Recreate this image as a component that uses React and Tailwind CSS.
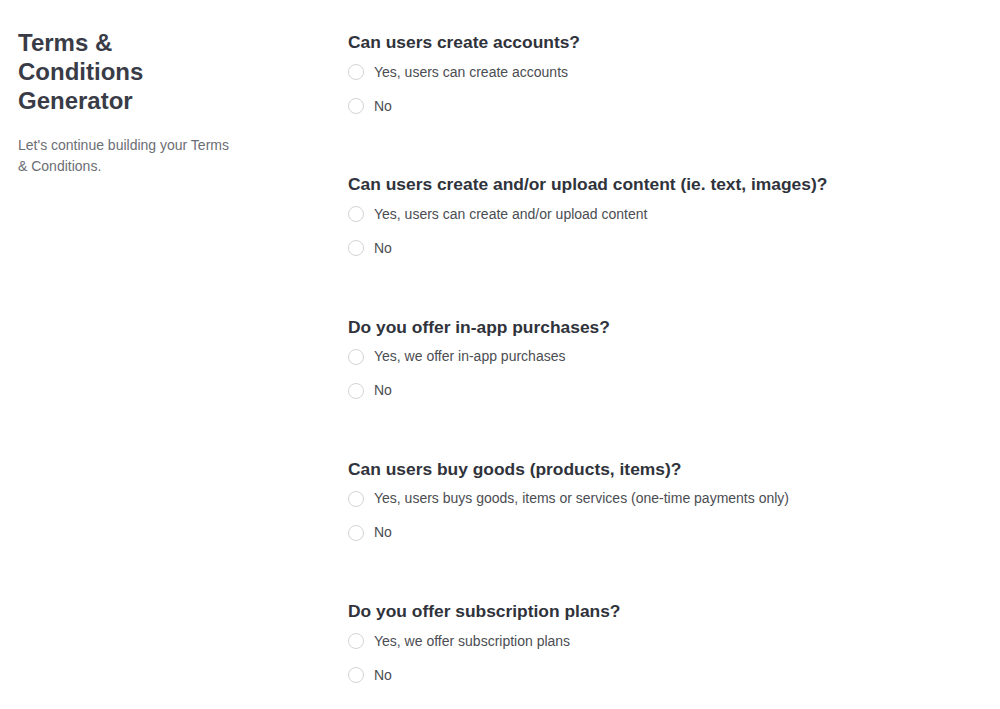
import React from 'react';

const questions = [
  { q: 'Can users create accounts?', yes: 'Yes, users can create accounts' },
  { q: 'Can users create and/or upload content (ie. text, images)?', yes: 'Yes, users can create and/or upload content' },
  { q: 'Do you offer in-app purchases?', yes: 'Yes, we offer in-app purchases' },
  { q: 'Can users buy goods (products, items)?', yes: 'Yes, users buys goods, items or services (one-time payments only)' },
  { q: 'Do you offer subscription plans?', yes: 'Yes, we offer subscription plans' },
];

const Radio = ({ label }) => (
  <label className="flex items-center h-[34px] cursor-pointer">
    <span className="w-4 h-4 rounded-full border border-[#d4d4d4] bg-white shrink-0"></span>
    <span className="ml-[10px] text-[14px] text-[#4b4d52]">{label}</span>
  </label>
);

const App = () => {
  return (
    <div className="min-h-screen bg-white flex pl-[18px] pt-[28px]" style={{ fontFamily: '"Liberation Sans", Arial, sans-serif' }}>
      <div className="w-[330px] shrink-0">
        <h1 className="text-[24px] leading-[29px] font-bold text-[#393c47] w-[200px]">
          Terms &amp; Conditions Generator
        </h1>
        <p className="mt-[20px] text-[14px] leading-[21px] text-[#6b6e75] w-[215px]">
          Let's continue building your Terms &amp; Conditions.
        </p>
      </div>
      <div className="flex flex-col gap-[49.25px] pt-[2px]">
        {questions.map((item) => (
          <div key={item.q}>
            <h3 className="text-[17.4px] leading-[24px] font-bold text-[#30333b]">{item.q}</h3>
            <div className="mt-[1px]">
              <Radio label={item.yes} />
              <Radio label="No" />
            </div>
          </div>
        ))}
      </div>
    </div>
  );
};

export default App;
